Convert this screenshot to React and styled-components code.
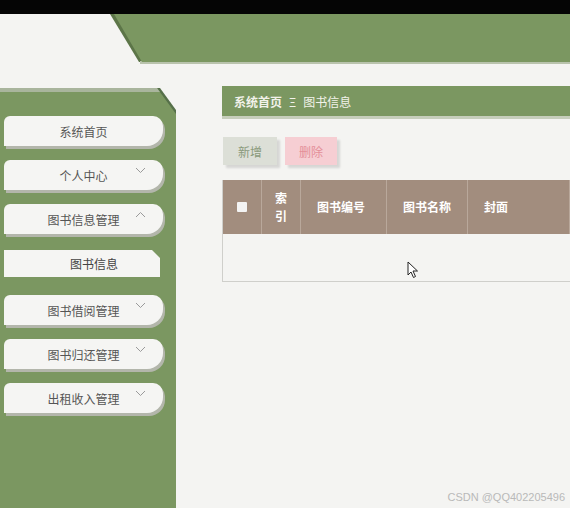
import React from 'react';
import styled, { createGlobalStyle } from 'styled-components';

const GREEN = '#7b9761';
const BG = '#f4f4f2';

const GlobalStyle = createGlobalStyle`
  html, body {
    margin: 0;
    padding: 0;
    background: ${BG};
    font-family: "Noto Sans CJK SC", "Noto Sans", sans-serif;
    overflow: hidden;
  }
`;

const Page = styled.div`
  position: relative;
  width: 570px;
  height: 508px;
  overflow: hidden;
  background: ${BG};
`;

const TopBar = styled.div`
  height: 14px;
  background: #050505;
`;

const Header = styled.div`
  position: relative;
  height: 50px;
  margin-left: 110px;

  &::before {
    content: '';
    position: absolute;
    inset: 0 0 0 0;
    background: #5c7548;
    clip-path: polygon(0 0, 100% 0, 100% 48px, 29px 48px);
  }

  &::after {
    content: '';
    position: absolute;
    inset: 0;
    background: ${GREEN};
    clip-path: polygon(4px 0, 100% 0, 100% 48px, 32px 48px);
  }
`;

const HeaderStripe = styled.div`
  position: absolute;
  left: 30px;
  right: 0;
  bottom: 0;
  height: 3px;
  background: #b9c3ad;
`;

const Body = styled.div`
  display: flex;
  align-items: flex-start;
`;

const Sidebar = styled.aside`
  position: relative;
  flex: 0 0 176px;
  margin-top: 24px;
  height: 420px;
  background: #56704a;
  clip-path: polygon(0 0, 160px 0, 100% 22px, 100% 100%, 0 100%);
`;

const SidebarInner = styled.div`
  height: 100%;
  border-top: 4px solid #a9b59d;
  background: ${GREEN};
  clip-path: polygon(0 0, 157px 0, 176px 26px, 176px 100%, 0 100%);
  box-sizing: border-box;
  padding: 24px 0 0 4px;
  display: flex;
  flex-direction: column;
  gap: 14px;
`;

const MenuItem = styled.div`
  position: relative;
  width: 159px;
  height: 30px;
  box-sizing: border-box;
  padding-top: 1px;
  background: #f5f5f3;
  border-radius: 6px 10px 16px 0;
  box-shadow: 2px 3px 0 #b3b6ab;
  display: flex;
  align-items: center;
  justify-content: center;
  font-size: 12px;
  color: #555;
`;

const SubItem = styled.div`
  width: 156px;
  height: 27px;
  margin-top: 2px;
  margin-bottom: 4px;
  background: #f5f5f3;
  clip-path: polygon(0 0, 148px 0, 100% 8px, 100% 100%, 0 100%);
  display: flex;
  align-items: center;
  justify-content: center;
  padding-left: 24px;
  box-sizing: border-box;
  font-size: 12px;
  color: #444;
`;

const Chevron = styled.svg`
  position: absolute;
  right: 17px;
  top: 7px;
`;

const Main = styled.main`
  flex: 1;
  padding: 22px 0 0 46px;
  min-width: 0;
`;

const Crumbs = styled.div`
  height: 30px;
  background: ${GREEN};
  border-bottom: 3px solid #c6cebb;
  display: flex;
  align-items: center;
  gap: 7px;
  padding-left: 12px;
  font-size: 12px;
  color: #f2f2ea;
`;

const CrumbStrong = styled.span`
  font-weight: bold;
`;

const Actions = styled.div`
  display: flex;
  gap: 8px;
  margin: 18px 0 15px 1px;
`;

const Button = styled.div`
  width: ${(p) => p.$w}px;
  height: 28px;
  display: flex;
  align-items: center;
  justify-content: center;
  font-size: 12px;
  background: ${(p) => p.$bg};
  color: ${(p) => p.$fg};
  box-shadow: 3px 3px 2px rgba(0, 0, 0, 0.12);
`;

const Table = styled.div`
  border-left: 1px solid #cfcfcb;
  border-bottom: 1px solid #cfcfcb;
`;

const HeadRow = styled.div`
  display: grid;
  grid-template-columns: 39px 39px 86px 81px 1fr;
  height: 54px;
  background: #a28d7e;
`;

const HeadCell = styled.div`
  display: flex;
  align-items: center;
  justify-content: ${(p) => (p.$center ? 'center' : 'flex-start')};
  padding-left: ${(p) => (p.$center ? 0 : 16)}px;
  border-right: 1px solid #b9a89b;
  color: #fff;
  font-size: 12px;
  font-weight: bold;
  line-height: 18px;
  text-align: center;
`;

const Check = styled.span`
  width: 10px;
  height: 10px;
  background: #f3f3f3;
  border-radius: 1px;
`;

const EmptyRow = styled.div`
  height: 47px;
  background: ${BG};
`;

const Watermark = styled.div`
  position: absolute;
  right: 5px;
  bottom: 5px;
  font-family: "Liberation Sans", sans-serif;
  font-size: 11px;
  color: #b9b9b9;
`;

const Cursor = styled.svg`
  position: absolute;
  left: 407px;
  top: 261px;
`;

function Down() {
  return (
    <Chevron width="11" height="7" viewBox="0 0 11 7">
      <polyline points="1,1 5.5,5.5 10,1" fill="none" stroke="#9a9a9a" strokeWidth="1" />
    </Chevron>
  );
}

function Up() {
  return (
    <Chevron width="11" height="7" viewBox="0 0 11 7">
      <polyline points="1,6 5.5,1.5 10,6" fill="none" stroke="#9a9a9a" strokeWidth="1" />
    </Chevron>
  );
}

const menu = [
  { label: '系统首页' },
  { label: '个人中心', icon: 'down' },
  { label: '图书信息管理', icon: 'up', children: ['图书信息'] },
  { label: '图书借阅管理', icon: 'down' },
  { label: '图书归还管理', icon: 'down' },
  { label: '出租收入管理', icon: 'down' },
];

export default function App() {
  return (
    <Page>
      <GlobalStyle />
      <TopBar />
      <Header>
        <HeaderStripe />
      </Header>
      <Body>
        <Sidebar>
          <SidebarInner>
            {menu.map((m) => (
              <React.Fragment key={m.label}>
                <MenuItem>
                  {m.label}
                  {m.icon === 'down' && <Down />}
                  {m.icon === 'up' && <Up />}
                </MenuItem>
                {m.children && m.children.map((c) => <SubItem key={c}>{c}</SubItem>)}
              </React.Fragment>
            ))}
          </SidebarInner>
        </Sidebar>
        <Main>
          <Crumbs>
            <CrumbStrong>系统首页</CrumbStrong>
            <span>Ξ</span>
            <span>图书信息</span>
          </Crumbs>
          <Actions>
            <Button $w={54} $bg="#dcdfd7" $fg="#8a9a7c">新增</Button>
            <Button $w={52} $bg="#f6ced3" $fg="#e48f99">删除</Button>
          </Actions>
          <Table>
            <HeadRow>
              <HeadCell $center><Check /></HeadCell>
              <HeadCell $center>索<br />引</HeadCell>
              <HeadCell>图书编号</HeadCell>
              <HeadCell>图书名称</HeadCell>
              <HeadCell>封面</HeadCell>
            </HeadRow>
            <EmptyRow />
          </Table>
        </Main>
      </Body>
      <Cursor width="12" height="18" viewBox="0 0 12 18">
        <path d="M1 1 L1 14 L4 11 L6.5 16.5 L8.5 15.5 L6 10 L10.5 10 Z" fill="#fff" stroke="#222" strokeWidth="1" strokeLinejoin="round" />
      </Cursor>
      <Watermark>CSDN @QQ402205496</Watermark>
    </Page>
  );
}
